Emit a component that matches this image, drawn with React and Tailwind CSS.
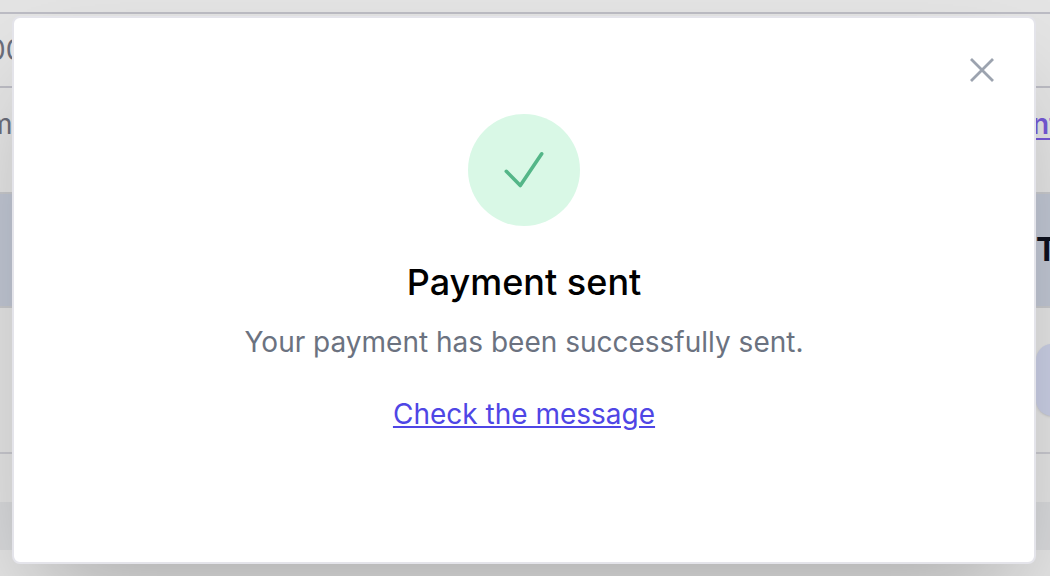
function PageBehind() {
  return (
    <div
      aria-hidden="true"
      className="flex min-h-screen flex-col overflow-hidden bg-[#e4e4e4] text-[28px] leading-10 text-[#6a6d7a]"
    >
      <div className="h-3" />
      <div className="flex h-[76px] items-center border-y-2 border-[#bcbcc4]">
        <span className="-ml-3">00</span>
      </div>
      <div className="flex h-[104px] items-start justify-between pt-4">
        <span className="-ml-3">m</span>
        <span className="-mr-3 w-7 font-semibold text-[#7558d6] underline decoration-2 underline-offset-4">
          <span className="-ml-0.5">nt</span>
        </span>
      </div>
      <div className="flex h-[116px] items-center justify-end border-y-2 border-[#c8c9cc] bg-[#c0c6d3]">
        <span className="w-3.5 text-[32px] font-bold text-[#0d111e]">T</span>
      </div>
      <div className="flex h-[146px] items-center justify-end border-b-2 border-[#c8c8ce]">
        <div className="-mr-5 h-[72px] w-[34px] rounded-2xl bg-[#c9cee4] shadow-sm" />
      </div>
      <div className="h-12" />
      <div className="h-12 bg-[#d8d9db]" />
      <div className="grow" />
    </div>
  );
}

function CloseIcon() {
  return (
    <svg viewBox="0 0 24 24" className="size-6" fill="none" stroke="currentColor" strokeWidth="2.8" aria-hidden="true">
      <path d="M1 1l22 22M23 1L1 23" />
    </svg>
  );
}

function CheckIcon() {
  return (
    <svg
      viewBox="0 0 48 48"
      className="size-12"
      fill="none"
      stroke="currentColor"
      strokeWidth="3.6"
      strokeLinecap="round"
      strokeLinejoin="round"
      aria-hidden="true"
    >
      <path d="M6.3 25.3l14 14.2L41.7 7.8" />
    </svg>
  );
}

export default function App() {
  return (
    <main className="relative font-['Inter',sans-serif]">
      <PageBehind />
      <div className="absolute inset-0 overflow-hidden pt-4 pr-3.5 pl-3">
        <section
          role="dialog"
          aria-modal="true"
          aria-labelledby="dialog-title"
          className="relative flex flex-col items-center rounded-lg border-2 border-[#e4e4ea] bg-white px-10 pt-24 pb-32 text-center text-[28px] leading-10 shadow-[0_50px_100px_-24px_rgba(0,0,0,0.25)]"
        >
          <button type="button" aria-label="Close" className="absolute top-10 right-10 text-[#9ca3af]">
            <CloseIcon />
          </button>
          <div className="flex size-28 items-center justify-center rounded-full bg-[#d9f8e6] text-[#54b688]">
            <CheckIcon />
          </div>
          <h1 id="dialog-title" className="mt-8 text-[36px] leading-12 font-medium text-black">
            Payment sent
          </h1>
          <p className="mt-4 text-[#6b7280]">Your payment has been successfully sent.</p>
          <a href="#message" className="mt-8 text-[#4f46e5] underline">
            Check the message
          </a>
        </section>
      </div>
    </main>
  );
}
